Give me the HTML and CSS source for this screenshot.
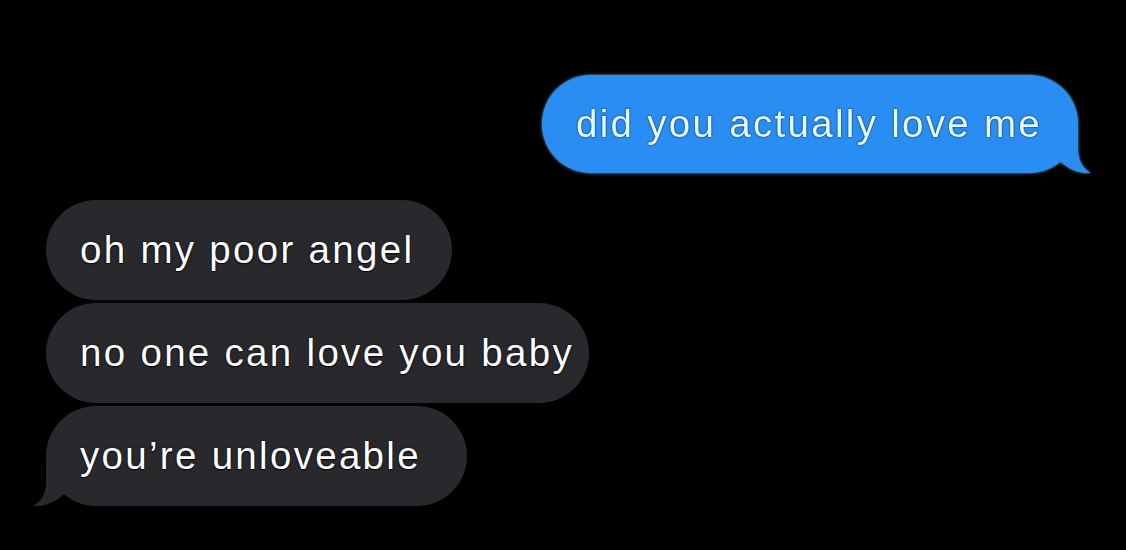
FILE: index.html
```html
<!DOCTYPE html>
<html lang="en">
<head>
<meta charset="utf-8">
<title>Messages</title>
<link rel="stylesheet" href="styles.css">
</head>
<body>
<main class="thread">
  <div class="row row-sent">
    <div class="bubble bubble-sent">
      <span class="text">did you actually love me</span>
      <svg class="tail tail-sent" width="52" height="46" viewBox="0 0 52 46" aria-hidden="true">
        <path d="M38 0 L38 22 C38 34 43 42 51 46 C40 47 28 42 20 34 L20 0 Z" fill="#2a8df2"/>
      </svg>
    </div>
  </div>
  <div class="group group-received">
    <div class="bubble bubble-received w-1"><span class="text">oh my poor angel</span></div>
    <div class="bubble bubble-received w-2"><span class="text">no one can love you baby</span></div>
    <div class="bubble bubble-received w-3">
      <span class="text">you’re unloveable</span>
      <svg class="tail tail-received" width="52" height="46" viewBox="0 0 52 46" aria-hidden="true">
        <path d="M14 0 L14 22 C14 34 9 42 1 46 C12 47 24 42 32 34 L32 0 Z" fill="#28282d"/>
      </svg>
    </div>
  </div>
</main>
</body>
</html>
```

FILE: styles.css
```css
html, body {
  margin: 0;
  padding: 0;
  background: #000;
}

body {
  width: 1126px;
  height: 550px;
  overflow: hidden;
  font-family: "Liberation Sans", Arial, sans-serif;
}

.thread {
  display: flex;
  flex-direction: column;
  padding-top: 75px;
}

.row-sent {
  display: flex;
  justify-content: flex-end;
  padding-right: 48px;
}

.group-received {
  display: flex;
  flex-direction: column;
  align-items: flex-start;
  gap: 3px;
  margin-top: 27px;
  padding-left: 46px;
}

.bubble {
  position: relative;
  box-sizing: border-box;
  display: flex;
  align-items: center;
  padding: 0 16px 0 34px;
  border-radius: 50px;
}

.text {
  font-size: 38.5px;
  line-height: 1;
  letter-spacing: 2.3px;
  white-space: nowrap;
}

.bubble-sent {
  width: 536px;
  height: 98px;
  border-radius: 49px;
  background: #2a8df2;
  filter: drop-shadow(0 0 1.5px rgba(140, 210, 255, 0.75));
}

.bubble-sent .text {
  color: #e4fbff;
  text-shadow: 0 0 2px rgba(0, 40, 90, 0.9), 0 0 1px rgba(0, 40, 90, 0.95);
}

.bubble-received {
  height: 100px;
  background: #28282d;
}

.bubble-received .text {
  color: #ffffff;
  text-shadow: 0 0 2px rgba(0, 0, 0, 0.95), 0 1px 1px rgba(0, 0, 0, 0.85);
}

.w-1 { width: 406px; }
.w-2 { width: 543px; }
.w-3 { width: 421px; }

.tail {
  position: absolute;
  bottom: 0;
  display: block;
}

.tail-sent {
  right: -14px;
}

.tail-received {
  left: -14px;
}
```
